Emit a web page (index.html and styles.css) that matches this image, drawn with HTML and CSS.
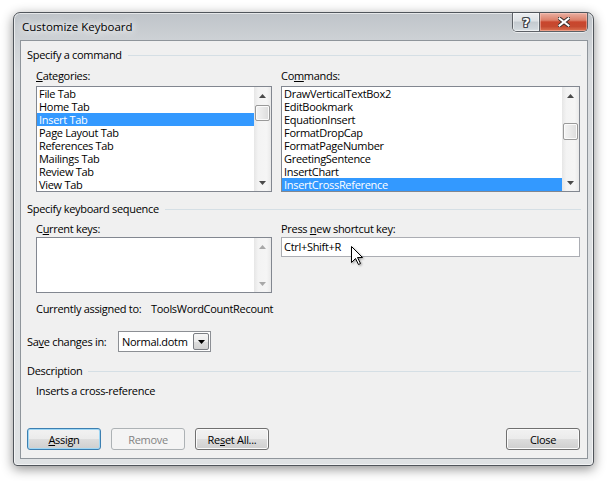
FILE: index.html
```html
<!DOCTYPE html>
<html>
<head>
<meta charset="utf-8">
<title>Customize Keyboard</title>
<link rel="stylesheet" href="styles.css">
</head>
<body>
<div class="window">
  <div class="titlebar">
    <span class="title">Customize Keyboard</span>
    <div class="caption-btns">
      <div class="cap help"><span class="qmark">?</span></div>
      <div class="cap close">
        <svg width="12" height="10" viewBox="0 0 12 10">
          <path d="M1.5 1.5 L10.5 8.5 M10.5 1.5 L1.5 8.5" stroke="#3b2f2c" stroke-width="4" stroke-linecap="square" fill="none"/>
          <path d="M1.5 1.5 L10.5 8.5 M10.5 1.5 L1.5 8.5" stroke="#ffffff" stroke-width="2" stroke-linecap="square" fill="none"/>
        </svg>
      </div>
    </div>
  </div>
  <div class="client">
    <div class="group-head"><span>Specify a command</span><i class="rule"></i></div>
    <div class="cols top-cols">
      <div class="field">
        <div class="label"><u>C</u>ategories:</div>
        <div class="listbox">
          <ul class="items">
            <li>File Tab</li>
            <li>Home Tab</li>
            <li class="sel">Insert Tab</li>
            <li>Page Layout Tab</li>
            <li>References Tab</li>
            <li>Mailings Tab</li>
            <li>Review Tab</li>
            <li>View Tab</li>
          </ul>
          <div class="vscroll">
            <div class="arrow"><svg width="7" height="4" viewBox="0 0 7 4"><polygon points="0,4 3.5,0 7,4" fill="#4a4a4a"/></svg></div>
            <div class="track"><div class="thumb thumb-cat"></div></div>
            <div class="arrow"><svg width="7" height="4" viewBox="0 0 7 4"><polygon points="0,0 7,0 3.5,4" fill="#4a4a4a"/></svg></div>
          </div>
        </div>
      </div>
      <div class="field">
        <div class="label">Co<u>m</u>mands:</div>
        <div class="listbox">
          <ul class="items">
            <li>DrawVerticalTextBox2</li>
            <li>EditBookmark</li>
            <li>EquationInsert</li>
            <li>FormatDropCap</li>
            <li>FormatPageNumber</li>
            <li>GreetingSentence</li>
            <li>InsertChart</li>
            <li class="sel">InsertCrossReference</li>
          </ul>
          <div class="vscroll">
            <div class="arrow"><svg width="7" height="4" viewBox="0 0 7 4"><polygon points="0,4 3.5,0 7,4" fill="#4a4a4a"/></svg></div>
            <div class="track"><div class="thumb thumb-cmd"></div></div>
            <div class="arrow"><svg width="7" height="4" viewBox="0 0 7 4"><polygon points="0,0 7,0 3.5,4" fill="#4a4a4a"/></svg></div>
          </div>
        </div>
      </div>
    </div>

    <div class="group-head head-2"><span>Specify keyboard sequence</span><i class="rule"></i></div>
    <div class="cols keys-cols">
      <div class="field">
        <div class="label">C<u>u</u>rrent keys:</div>
        <div class="listbox keysbox">
          <div class="items"></div>
          <div class="vscroll">
            <div class="arrow"><svg width="7" height="4" viewBox="0 0 7 4"><polygon points="0,4 3.5,0 7,4" fill="#a8a8a8"/></svg></div>
            <div class="track"></div>
            <div class="arrow"><svg width="7" height="4" viewBox="0 0 7 4"><polygon points="0,0 7,0 3.5,4" fill="#a8a8a8"/></svg></div>
          </div>
        </div>
      </div>
      <div class="field">
        <div class="label">Press <u>n</u>ew shortcut key:</div>
        <div class="textbox">Ctrl+Shift+R</div>
      </div>
    </div>

    <div class="assigned"><span class="assigned-label">Currently assigned to:</span><span>ToolsWordCountRecount</span></div>

    <div class="save-row">
      <span class="save-label">Sa<u>v</u>e changes in:</span>
      <div class="combo">
        <span class="combo-text">Normal.dotm</span>
        <div class="combo-btn"><svg width="7" height="4" viewBox="0 0 7 4"><polygon points="0,0 7,0 3.5,4" fill="#000"/></svg></div>
      </div>
    </div>

    <div class="group-head head-3"><span>Description</span><i class="rule"></i></div>
    <div class="desc">Inserts a cross-reference</div>

    <div class="buttons">
      <div class="btn default"><u>A</u>ssign</div>
      <div class="btn disabled">Remove</div>
      <div class="btn">Re<u>s</u>et All...</div>
      <div class="btn close-btn">Close</div>
    </div>
  </div>
</div>

<svg class="cursor" width="14" height="21" viewBox="0 0 14 21">
  <polygon points="0.5,0.5 0.5,16.5 4.5,12.5 7.5,18.5 9.5,17.5 6.5,11.5 11.5,11.5" fill="#ffffff" stroke="#000000" stroke-width="1" stroke-linejoin="miter"/>
</svg>
</body>
</html>
```

FILE: styles.css
```css
* { box-sizing: border-box; }

html, body {
  margin: 0;
  padding: 0;
}

body {
  position: relative;
  width: 609px;
  height: 481px;
  overflow: hidden;
  background: #ffffff;
  font-family: "Open Sans", "Noto Sans", sans-serif;
  font-size: 11px;
  letter-spacing: -0.3px;
  color: #000000;
}

u { text-decoration: underline; text-underline-offset: 1px; }

/* ---------- window frame ---------- */
.window {
  margin: 12px 0 0 13px;
  width: 581px;
  height: 454px;
  border: 1px solid #50555b;
  border-radius: 7px 7px 4px 4px;
  background: linear-gradient(180deg, #bfc4c9 0, #cdd1d5 27px, #dadde0 60px, #dfe2e4 100%);
  box-shadow: 0 3px 12px rgba(0, 0, 0, 0.45), inset 0 0 0 1px rgba(255, 255, 255, 0.6);
  padding: 0 5px 6px 6px;
  display: flex;
  flex-direction: column;
}

.titlebar {
  height: 27px;
  display: flex;
  align-items: center;
  justify-content: space-between;
}

.title {
  padding-left: 2px;
  font-size: 11.5px;
  letter-spacing: 0;
  line-height: 15px;
  color: #000;
  text-shadow: 0 0 6px #ffffff, 0 0 10px #ffffff, 0 0 14px rgba(255,255,255,0.9);
}

.caption-btns {
  align-self: flex-start;
  display: flex;
  height: 19px;
  width: 76px;
  border: 1px solid #5d6167;
  border-top: none;
  border-radius: 0 0 5px 5px;
  overflow: hidden;
  box-shadow: 0 1px 0 rgba(255,255,255,0.6);
}

.cap {
  display: flex;
  align-items: center;
  justify-content: center;
  height: 100%;
}

.help {
  width: 27px;
  border-right: 1px solid #5d6167;
  background: linear-gradient(180deg, #eceef0 0, #dde1e5 45%, #c4cad0 50%, #cfd5da 85%, #dde2e6 100%);
  box-shadow: inset 0 0 0 1px rgba(255,255,255,0.5);
}

.qmark {
  font-family: "DejaVu Sans", sans-serif;
  font-weight: bold;
  font-size: 13px;
  letter-spacing: 0;
  line-height: 13px;
  color: #ffffff;
  text-shadow: 1px 0 #3f4449, -1px 0 #3f4449, 0 1px #3f4449, 0 -1px #3f4449, 1px 1px #3f4449, -1px -1px #3f4449, 1px -1px #3f4449, -1px 1px #3f4449;
}

.close {
  flex: 1;
  background: linear-gradient(180deg, #eab0a2 0, #dc806a 40%, #c9462d 50%, #c54a30 75%, #dc7453 100%);
  box-shadow: inset 0 0 0 1px rgba(255,210,200,0.45);
}

/* ---------- client area ---------- */
.client {
  flex: 1;
  display: flex;
  flex-direction: column;
  background: #f0f0f0;
  border: 1px solid #8f959b;
  padding: 6px 6px 8px 6px;
}

.group-head {
  display: flex;
  align-items: center;
  height: 15px;
  line-height: 15px;
  white-space: nowrap;
}

.group-head .rule {
  flex: 1;
  height: 1px;
  margin-left: 6px;
  margin-top: 1px;
  background: #d5dfe5;
}

.head-2 { margin-top: 9px; }
.head-3 { margin-top: 11px; }

.cols {
  display: grid;
  grid-template-columns: 236px 299px;
  column-gap: 9px;
  margin-left: 9px;
}

.top-cols { margin-top: 6px; }
.keys-cols { margin-top: 5px; }

.label {
  height: 15px;
  line-height: 15px;
  white-space: nowrap;
}

.top-cols .label { margin-bottom: 3px; }
.keys-cols .label { margin-bottom: 1px; }

/* ---------- list boxes ---------- */
.listbox {
  display: flex;
  height: 106px;
  border: 1px solid #828790;
  background: #ffffff;
}

.items {
  flex: 1;
  margin: 0;
  padding: 0;
  list-style: none;
  overflow: hidden;
}

.items li {
  height: 13px;
  line-height: 13px;
  padding-left: 2px;
  white-space: nowrap;
}

.items li.sel {
  background: #3399ff;
  color: #ffffff;
}

.vscroll {
  width: 17px;
  display: flex;
  flex-direction: column;
  background: linear-gradient(90deg, #e6e6e6 0, #f3f3f3 25%, #f5f5f5 75%, #e9e9e9 100%);
}

.arrow {
  height: 17px;
  display: flex;
  align-items: center;
  justify-content: center;
}

.arrow svg { display: block; }

.track {
  flex: 1;
}

.thumb {
  margin: 0 1px;
  border: 1px solid #999999;
  border-radius: 2px;
  background: linear-gradient(90deg, #f4f4f4 0, #e9e9e9 50%, #dcdcdc 100%);
  box-shadow: inset 0 0 0 1px #fbfbfb;
}

.thumb-cat { margin-top: 1px; height: 16px; }
.thumb-cmd { margin-top: 19px; height: 17px; }

.keysbox { height: 56px; }

/* ---------- text box ---------- */
.textbox {
  height: 20px;
  line-height: 18px;
  border: 1px solid #abadb3;
  background: #ffffff;
  padding-left: 2px;
  white-space: nowrap;
}

/* ---------- assigned ---------- */
.assigned {
  margin-top: 8px;
  margin-left: 9px;
  height: 15px;
  line-height: 15px;
  display: flex;
  white-space: nowrap;
}

.assigned-label {
  width: 115px;
}

/* ---------- save row ---------- */
.save-row {
  margin-top: 15px;
  height: 21px;
  display: flex;
  align-items: center;
  white-space: nowrap;
}

.save-label { width: 91px; }

.combo {
  width: 93px;
  height: 21px;
  border: 1px solid #8c8f94;
  background: #ffffff;
  display: flex;
  align-items: center;
  justify-content: space-between;
}

.combo-text { padding-left: 3px; line-height: 19px; }

.combo-btn {
  width: 16px;
  height: 17px;
  margin-right: 1px;
  border: 1px solid #7b7e83;
  border-radius: 2px;
  background: linear-gradient(180deg, #f6f6f6 0, #ececec 50%, #dedede 51%, #d2d2d2 100%);
  display: flex;
  align-items: center;
  justify-content: center;
}

.combo-btn svg { display: block; }

/* ---------- description ---------- */
.desc {
  margin-top: 5px;
  margin-left: 9px;
  height: 15px;
  line-height: 15px;
}

/* ---------- buttons ---------- */
.buttons {
  margin-top: auto;
  display: flex;
  gap: 10px;
  height: 22px;
}

.btn {
  width: 74px;
  height: 22px;
  border: 1px solid #707070;
  border-radius: 3px;
  background: linear-gradient(180deg, #f2f2f2 0, #ebebeb 50%, #dddddd 51%, #cfcfcf 100%);
  box-shadow: inset 0 0 0 1px #fbfbfb;
  display: flex;
  align-items: center;
  justify-content: center;
  line-height: 15px;
  white-space: nowrap;
}

.btn.default {
  border-color: #3c7fb1;
  box-shadow: inset 0 0 0 1px #9fd7f5;
}

.btn.disabled {
  border-color: #adb2b5;
  background: #f4f4f4;
  box-shadow: none;
  color: #838383;
}

.close-btn {
  margin-left: auto;
  margin-right: 1px;
}

/* ---------- mouse pointer overlay ---------- */
.cursor {
  position: absolute;
  left: 351px;
  top: 246px;
  filter: drop-shadow(1px 1px 1px rgba(0, 0, 0, 0.35));
}
```
